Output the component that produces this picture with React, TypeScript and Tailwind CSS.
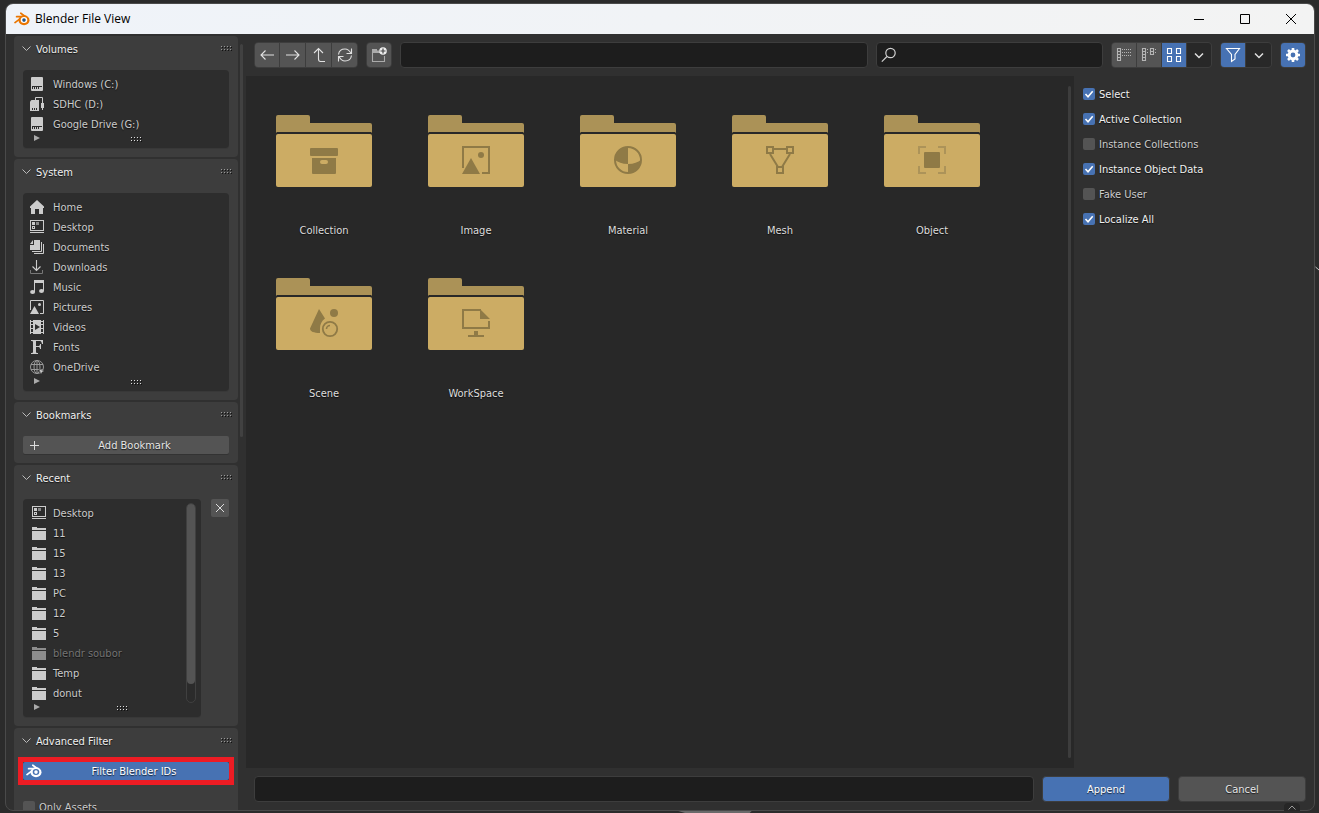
import React from "react";

const shadow = "[text-shadow:0_1px_1px_rgba(0,0,0,0.7)]";
const text = "pt-0.5 leading-4 [text-shadow:0_1px_1px_rgba(0,0,0,0.7)]";

type IconProps = { children: React.ReactNode; className?: string };

function Icon14({ children, className = "" }: IconProps) {
  return (
    <svg viewBox="0 0 14 14" className={"size-3.5 shrink-0 " + className} fill="#cccccc" aria-hidden="true">
      {children}
    </svg>
  );
}

const icons: Record<string, React.ReactNode> = {
  drive: (
    <>
      <rect x="1" width="12" height="14" rx="1" />
      <path d="M2 9h10v4H2z" fill="#2d2d2d" />
      <path d="M3 10h1v2H3zM5 10h1v2H5zM7 10h1v2H7zM9 10h3v3H9zM2 12h10v1H2z" />
    </>
  ),
  removable: (
    <>
      <path d="M0 4.500 1.500 3H9v11H0z" />
      <path d="M2 11h1v2H2zM4 11h1v2H4zM6 11h1v2H6z" fill="#2d2d2d" />
      <path d="M5.500 3V.5h7V7M12.500 11v2" fill="none" stroke="#cccccc" />
      <path d="M11 6h3v5h-3z" />
    </>
  ),
  home: <path d="M7 0 14 6.500V8h-1v6H9V9H5v5H1V8H0V6.500z" />,
  desktop: (
    <g shapeRendering="crispEdges">
      <path d="M0 0h14v11H0zM1 1v9h12V1z" fillRule="evenodd" />
      <path d="M2 2h3v3H2zM0 12h14v1H0z" />
      <path d="M6 2h3v3H6z" fill="#888888" />
      <path d="M2 6h3v3H2zM3 7v1h1V7z" fillRule="evenodd" />
    </g>
  ),
  documents: (
    <>
      <path d="M4 0h6v10H0V5h4zM3 0v4H0z" />
      <path d="M11.500 2v9.500H2M13.500 4v9.500H4" fill="none" stroke="#cccccc" />
    </>
  ),
  downloads: (
    <>
      <path d="M6.500 0v10M2.500 6.500l4 4 4-4" fill="none" stroke="#cccccc" strokeWidth="1.100" />
      <path d="M.5 10v3.500h12V10" fill="none" stroke="#777777" />
    </>
  ),
  music: (
    <>
      <path d="M4 0h10v11h-1V3H5v9H4z" />
      <ellipse cx="2.600" cy="12" rx="2.500" ry="2" />
      <ellipse cx="11.500" cy="11" rx="2.500" ry="2" />
    </>
  ),
  pictures: (
    <>
      <path d="M.5 10V.5h13v13H10" fill="none" stroke="#cccccc" />
      <path d="M4.500 6 9 14H0z" />
      <circle cx="9.500" cy="4.500" r="1.500" />
    </>
  ),
  videos: (
    <>
      <path d="M3 0h8v14H3zM0 0h1v14H0zM13 0h1v14h-1zM0 1h14v1H0zM0 4h14v1H0zM0 8h14v1H0zM0 12h14v1H0z" />
      <path d="M5 4v6l5-3z" fill="#2d2d2d" />
    </>
  ),
  fonts: (
    <path d="M1 0h12v4h-1C11.500 1.500 11 1 9 1H6v5h2c1.500 0 2-.5 2-2h1v5h-1C10 7.500 9.500 7 8 7H6v5c0 .8.500 1 2 1v1H1v-1c1.500 0 2-.2 2-1V2C3 1.200 2.500 1 1 1z" />
  ),
  network: (
    <>
      <g fill="none" stroke="#999999">
        <circle cx="7" cy="7" r="6.500" />
        <ellipse cx="7" cy="7" rx="3" ry="6.500" />
        <path d="M7 0v14M1 4.500h12M1 9.500h12" />
      </g>
      <path d="M9 9l5.500 2-2.300 1L11 14.500z" stroke="#2d2d2d" strokeWidth=".5" />
    </>
  ),
  folder: (
    <g shapeRendering="crispEdges">
      <path d="M0 1h5v1h9v2H0z" />
      <path d="M0 5h14v9H0z" />
    </g>
  ),
};

function Grip({ className = "" }: { className?: string }) {
  return (
    <svg viewBox="0 0 11 5" className={"h-[5px] w-[11px] " + className} shapeRendering="crispEdges" aria-hidden="true">
      {[0, 3, 6, 9].map((x) =>
        [0, 3].map((y) => (
          <React.Fragment key={`${x}-${y}`}>
            <rect x={x + 1} y={y + 1} width="1" height="1" fill="#111111" />
            <rect x={x} y={y} width="1" height="1" fill="currentColor" />
          </React.Fragment>
        ))
      )}
    </svg>
  );
}

function Panel({ title, children }: { title: string; children: React.ReactNode }) {
  return (
    <section className="shrink-0 rounded bg-[#3d3d3d] pb-[9px]">
      <button type="button" className="flex h-[34px] w-full items-start px-2 pt-[5px] text-left text-[#f0f0f0]">
        <svg viewBox="0 0 9 16" className="h-4 w-[9px]" fill="none" stroke="#bbbbbb" aria-hidden="true">
          <path d="M.5 5.500l4 4 4-4" />
        </svg>
        <span className={"ml-[5px] flex-1 pt-px leading-4 " + shadow}>{title}</span>
        <Grip className="mt-[5px] -mr-0.5 text-[#999999]" />
      </button>
      {children}
    </section>
  );
}

type Item = { icon: string; label: string; dim?: boolean };

function ItemList({ items, inset = false }: { items: Item[]; inset?: boolean }) {
  return (
    <div className="flex-1 rounded bg-[#2d2d2d] pt-1 shadow-[0_1px_0_#383838]">
      <div className="flex">
        <ul className="flex-1">
          {items.map((item) => (
            <li key={item.label}>
              <button
                type="button"
                className={
                  "flex h-5 w-full items-center text-left " +
                  (inset ? "gap-[7px] pl-[9px] " : "gap-[9px] pl-[7px] ") +
                  (item.dim ? "text-[#747474]" : "text-[#cccccc]")
                }
              >
                <Icon14 className={item.dim ? "opacity-60" : ""}>{icons[item.icon]}</Icon14>
                <span className={text}>{item.label}</span>
              </button>
            </li>
          ))}
        </ul>
        {inset && (
          <div className="mr-[5px] flex w-2.5 flex-col rounded-full border border-[#404040] bg-[#2b2b2b]">
            <div className="h-[91%] rounded-full bg-[#545454]" />
          </div>
        )}
      </div>
      <div className="flex h-3.5 items-start pl-[11px]">
        <svg viewBox="0 0 6 6" className="mr-[3px] mt-px size-1.5" fill="#aaaaaa" aria-hidden="true">
          <path d="M0 0l6 3-6 3z" />
        </svg>
        <Grip className="mx-auto mt-[3px] text-[#dddddd]" />
      </div>
    </div>
  );
}

const volumes: Item[] = [
  { icon: "drive", label: "Windows (C:)" },
  { icon: "removable", label: "SDHC (D:)" },
  { icon: "drive", label: "Google Drive (G:)" },
];

const system: Item[] = [
  { icon: "home", label: "Home" },
  { icon: "desktop", label: "Desktop" },
  { icon: "documents", label: "Documents" },
  { icon: "downloads", label: "Downloads" },
  { icon: "music", label: "Music" },
  { icon: "pictures", label: "Pictures" },
  { icon: "videos", label: "Videos" },
  { icon: "fonts", label: "Fonts" },
  { icon: "network", label: "OneDrive" },
];

const recent: Item[] = [
  { icon: "desktop", label: "Desktop" },
  { icon: "folder", label: "11" },
  { icon: "folder", label: "15" },
  { icon: "folder", label: "13" },
  { icon: "folder", label: "PC" },
  { icon: "folder", label: "12" },
  { icon: "folder", label: "5" },
  { icon: "folder", label: "blendr soubor", dim: true },
  { icon: "folder", label: "Temp" },
  { icon: "folder", label: "donut" },
];

function BlenderMark({ body, ring, pupil, className }: { body: string; ring: string; pupil: string; className: string }) {
  return (
    <svg viewBox="0 0 16 14" className={className} aria-hidden="true">
      <g fill="none" stroke={body} strokeLinecap="round" strokeWidth="1.700">
        <path d="M6.800 1.200 11.500 4.600" />
        <path d="M2.600 4.700H9" />
        <path d="M1 10.600 7.500 5.600" />
      </g>
      <ellipse cx="10" cy="8.300" rx="5.500" ry="5" fill={body} />
      <ellipse cx="10" cy="8.100" rx="3.300" ry="3" fill={ring} />
      <circle cx="10" cy="8.100" r="1.800" fill={pupil} />
    </svg>
  );
}

function Check({ label, checked = false }: { label: string; checked?: boolean }) {
  return (
    <label className={"flex h-[25px] items-center gap-1 pb-px " + (checked ? "text-[#f0f0f0]" : "text-[#cccccc]")}>
      <span className="grid size-3 place-items-center">
        <input
          type="checkbox"
          defaultChecked={checked}
          className="peer col-start-1 row-start-1 size-3 appearance-none rounded-xs bg-[#545454] checked:bg-[#4772b3]"
        />
        <svg
          viewBox="0 0 12 12"
          className="pointer-events-none invisible col-start-1 row-start-1 size-3 peer-checked:visible"
          fill="none"
          stroke="#ffffff"
          strokeWidth="1.600"
          aria-hidden="true"
        >
          <path d="M2.500 6l2.500 2.700L9.700 3.200" />
        </svg>
      </span>
      <span className={text}>{label}</span>
    </label>
  );
}

const emblems: Record<string, React.ReactNode> = {
  Collection: (
    <>
      <rect x="0" y="2" width="28" height="8" rx="1" />
      <path d="M2 12h24v15a1 1 0 0 1-1 1H3a1 1 0 0 1-1-1zM12 14a2 2 0 0 0 0 4h4a2 2 0 0 0 0-4z" fillRule="evenodd" />
    </>
  ),
  Image: (
    <>
      <path d="M1 22V1h26v26h-7" fill="none" stroke="#8f7a46" strokeWidth="2" />
      <path d="M9 12l9 16H0z" />
      <circle cx="19" cy="9" r="3" />
    </>
  ),
  Material: (
    <>
      <circle cx="14" cy="14" r="13" fill="none" stroke="#8f7a46" strokeWidth="2" />
      <path d="M14 1v17C8 18 4 16 1 14 1 6 7 1 14 1zM14 18c6 0 10-2 13-4 0 8-6 13-13 13z" />
    </>
  ),
  Mesh: (
    <g fill="none" stroke="#8f7a46" strokeWidth="2">
      <path d="M1 1h6v6H1zM21 1h6v6h-6zM11 21h6v6h-6zM7 3h14M4 8l8 13M24 8l-8 13" />
    </g>
  ),
  Object: (
    <>
      <path d="M1 8V1h7M20 1h7v7M27 20v7h-7M8 27H1v-7" fill="none" stroke="#ac9359" strokeWidth="2" />
      <rect x="6" y="6" width="16" height="16" rx="1" />
    </>
  ),
  Scene: (
    <>
      <path d="M9 0l6 9.500c-3.500 2.500-5 6-5 10V24C4 24 0 22.500 0 19.500z" />
      <circle cx="24" cy="4" r="4" />
      <circle cx="20" cy="20" r="7.200" fill="none" stroke="#8f7a46" strokeWidth="1.800" />
      <path d="M16.500 20a3.500 3.500 0 0 1 3.500-3.500" fill="none" stroke="#8f7a46" strokeWidth="1.600" />
    </>
  ),
  WorkSpace: (
    <>
      <path d="M19 1H1v18h26v-7" fill="none" stroke="#8f7a46" strokeWidth="2" />
      <path d="M18 0l10 10H18zM12 22h4v4h6v2H6v-2h6z" />
    </>
  ),
};

function Folder({ name }: { name: string }) {
  return (
    <button type="button" className="flex h-[163px] flex-col items-center text-[#dddddd]">
      <svg viewBox="0 0 96 72" className="h-[72px] w-24" aria-hidden="true">
        <path d="M0 18V2a2 2 0 0 1 2-2h30a2 2 0 0 1 2 2v6h60a2 2 0 0 1 2 2v8l-1-1H1z" fill="#ab9257" />
        <rect y="19" width="96" height="53" rx="2" fill="#ccac64" />
        <g transform="translate(34 31)" fill="#8f7a46">
          {emblems[name]}
        </g>
      </svg>
      <span className={"mt-9 leading-4 " + shadow}>{name}</span>
    </button>
  );
}

function Tool({ label, className, children }: { label: string; className: string; children: React.ReactNode }) {
  return (
    <button type="button" aria-label={label} className={"grid h-6 place-items-center " + className}>
      <svg viewBox="0 0 16 16" className="size-4" fill="none" stroke="#e0e0e0" strokeWidth="1.100" aria-hidden="true">
        {children}
      </svg>
    </button>
  );
}

const groupBox = "flex shrink-0 gap-px overflow-hidden rounded border border-[#3d3d3d] bg-[#3d3d3d]";
const field = "h-[26px] min-w-0 rounded border border-[#3d3d3d] bg-[#1d1d1d] text-[#e6e6e6] outline-none";

function Toolbar() {
  return (
    <div className="flex h-[42px] shrink-0 items-center gap-2 px-2">
      <div className={groupBox}>
        <Tool label="Back" className="w-6 bg-[#545454]">
          <path d="M15 8H2M6.500 3.500L2 8l4.500 4.500" />
        </Tool>
        <Tool label="Forward" className="w-[25px] bg-[#545454]">
          <path d="M1 8h13M9.500 3.500L14 8l-4.500 4.500" />
        </Tool>
        <Tool label="Parent directory" className="w-[25px] bg-[#545454]">
          <path d="M7.500 1.500V12c0 1.500.5 2.500 2 2.500H14M3 6l4.500-4.500L12 6" />
        </Tool>
        <Tool label="Refresh" className="w-[25px] bg-[#545454]">
          <path d="M1.500 7.500C2 4 4.500 2 8 2c2.500 0 4.500 1.500 6 4.500M14.500 1.500v5h-5M14.500 8.500C14 12 11.500 14 8 14c-2.500 0-4.500-1.500-6-4.500M1.500 14.500v-5h5" />
        </Tool>
      </div>
      <div className={groupBox}>
        <Tool label="New folder" className="w-6 bg-[#545454]">
          <path d="M9 5.500H1.500v9h12V9" stroke="#aaaaaa" />
          <path d="M1 2h5v1.500h2V6H1z" fill="#aaaaaa" stroke="none" />
          <circle cx="12" cy="4" r="3.800" fill="#eeeeee" stroke="none" />
          <path d="M12 1.500v5M9.500 4h5" stroke="#444444" strokeWidth="1.200" />
        </Tool>
      </div>
      <input aria-label="Path" className={field + " flex-[469] px-2"} />
      <div className={field + " flex flex-[226] items-center gap-1 px-1"}>
        <svg viewBox="0 0 16 16" className="size-4 shrink-0" fill="none" stroke="#d0d0d0" strokeWidth="1.200" aria-hidden="true">
          <circle cx="9.500" cy="6" r="4.700" />
          <path d="M6 9.500L.8 14.700" />
        </svg>
        <input type="search" aria-label="Search" className="min-w-0 flex-1 bg-transparent outline-none" />
      </div>
      <div className={groupBox}>
        <Tool label="Vertical list" className="w-6 bg-[#545454]">
          <path d="M1.500 1.500h3v12h-3zM1.500 4.500h3M1.500 7.500h3M1.500 10.500h3" stroke="#b5b5b5" />
          <path d="M6 2.500h10M6 5.500h10M6 8.500h10" stroke="#b5b5b5" strokeDasharray="1 1" />
        </Tool>
        <Tool label="Horizontal list" className="w-6 bg-[#545454]">
          <path d="M1.500 1.500h3v12h-3zM1.500 4.500h3M1.500 7.500h3M1.500 10.500h3M9.500 1.500h3v6h-3zM9.500 4.500h3" stroke="#b5b5b5" />
          <path d="M6.500 2v6M14.500 2v6" stroke="#b5b5b5" strokeWidth="1" strokeDasharray="1 2" />
        </Tool>
        <Tool label="Thumbnails" className="w-6 bg-[#4772b3]">
          <path d="M1.500 1.500h4v5h-4zM10.500 1.500h4v5h-4zM1.500 9.500h4v5h-4zM10.500 9.500h4v5h-4z" stroke="#ffffff" />
        </Tool>
        <Tool label="Display settings" className="w-6 bg-[#282828]">
          <path d="M4 6.500l4 4 4-4" strokeWidth="1.500" />
        </Tool>
      </div>
      <div className={groupBox}>
        <Tool label="Filter" className="w-6 bg-[#4772b3]">
          <path d="M1.500 1.500h13L10 7.500v4.500l-3.500 2.500v-7z" stroke="#ffffff" />
        </Tool>
        <Tool label="Filter settings" className="w-[25px] bg-[#282828]">
          <path d="M4 6.500l4 4 4-4" strokeWidth="1.500" />
        </Tool>
      </div>
      <div className={groupBox}>
        <Tool label="Toggle options" className="w-6 bg-[#4772b3]">
          <circle cx="8" cy="8" r="3.900" stroke="#ffffff" strokeWidth="3" />
          <path
            d="M8 1v2M8 13v2M1 8h2M13 8h2M3 3l1.500 1.500M11.500 11.500L13 13M13 3l-1.500 1.500M4.500 11.500L3 13"
            stroke="#ffffff"
            strokeWidth="2.600"
          />
        </Tool>
      </div>
    </div>
  );
}

function Sidebar() {
  return (
    <aside className="relative w-60 shrink-0 overflow-hidden pl-2 pt-0.5">
      <div className="flex w-56 flex-col gap-0.5">
        <Panel title="Volumes">
          <div className="px-[9px]">
            <ItemList items={volumes} />
          </div>
        </Panel>
        <Panel title="System">
          <div className="px-[9px]">
            <ItemList items={system} />
          </div>
        </Panel>
        <Panel title="Bookmarks">
          <div className="px-[9px]">
            <button type="button" className="flex h-[18px] w-full items-center rounded-xs bg-[#545454] px-1.5 text-[#e6e6e6] shadow-[0_1px_0_#333333]">
              <svg viewBox="0 0 11 11" className="size-[11px]" stroke="#dddddd" aria-hidden="true">
                <path d="M5.500 1v9M1 5.500h9" />
              </svg>
              <span className={"flex-1 pl-1.5 text-center " + text}>Add Bookmark</span>
            </button>
          </div>
        </Panel>
        <Panel title="Recent">
          <div className="flex items-start gap-2.5 px-[9px]">
            <ItemList items={recent} inset />
            <button type="button" aria-label="Clear recent items" className="grid size-[18px] place-items-center rounded-xs bg-[#545454]">
              <svg viewBox="0 0 10 10" className="size-2.5" stroke="#dddddd" aria-hidden="true">
                <path d="M1 1l8 8M9 1L1 9" />
              </svg>
            </button>
          </div>
        </Panel>
        <Panel title="Advanced Filter">
          <div className="px-[9px]">
            <div className="outline-5 outline-[#ed1c24]">
              <button type="button" className="flex h-[18px] w-full items-center rounded-xs bg-[#4772b3] px-[3px] text-white">
                <BlenderMark className="h-3.5 w-4" body="#ffffff" ring="#4772b3" pupil="#ffffff" />
                <span className={"flex-1 text-center " + text}>Filter Blender IDs</span>
              </button>
            </div>
            <div className="pt-[15px]">
              <Check label="Only Assets" />
            </div>
          </div>
        </Panel>
      </div>
      <div className="absolute left-[234px] top-2.5 h-[393px] w-[3px] rounded-full bg-[#414141]" />
    </aside>
  );
}

export default function App() {
  return (
    <div className="relative flex h-screen flex-col overflow-hidden bg-[#2b2b2b] pb-0.5 pl-[5px] pr-1 pt-[3px] font-['DejaVu_Sans_Condensed','Open_Sans',sans-serif] text-[11px]">
      <div className="flex min-h-0 flex-1 flex-col overflow-hidden rounded-lg border border-[#4a4a4a] bg-[#303030]">
        <header className="flex h-[30px] shrink-0 items-center bg-linear-to-r from-[#eff3f9] to-[#f3f3f3] pl-2 text-black">
          <BlenderMark className="h-3.5 w-4" body="#ea7600" ring="#ffffff" pupil="#265787" />
          <h1 className="ml-[5px] flex-1 font-['Open_Sans',sans-serif] text-xs">Blender File View</h1>
          {[
            ["Minimize", "M1 6.500h10"],
            ["Maximize", "M1.500 1.500h9v9h-9z"],
            ["Close", "M1 1l10 10M11 1L1 11"],
          ].map(([label, d]) => (
            <button key={label} type="button" aria-label={label} className="grid h-full w-[46px] place-items-center">
              <svg viewBox="0 0 12 12" className="size-3" fill="none" stroke="#000000" aria-hidden="true">
                <path d={d} />
              </svg>
            </button>
          ))}
        </header>
        <div className="flex min-h-0 flex-1">
          <Sidebar />
          <div className="flex min-w-0 flex-1 flex-col">
            <Toolbar />
            <div className="flex min-h-0 flex-1">
              <main className="flex min-w-0 flex-1 bg-[#282828] pl-0.5">
                <div className="grid flex-1 auto-rows-min grid-cols-[repeat(auto-fill,152px)] pt-[39px]">
                  {Object.keys(emblems).map((name) => (
                    <Folder key={name} name={name} />
                  ))}
                </div>
                <div className="my-2.5 mr-[3px] w-[3px] rounded-full bg-[#3d3d3d]" />
              </main>
              <aside className="w-60 shrink-0 pl-[9px] pt-1.5">
                <Check label="Select" checked />
                <Check label="Active Collection" checked />
                <Check label="Instance Collections" />
                <Check label="Instance Object Data" checked />
                <Check label="Fake User" />
                <Check label="Localize All" checked />
              </aside>
            </div>
            <div className="flex h-[42px] shrink-0 items-center gap-2 px-2">
              <input aria-label="File name" className={field + " flex-1 px-2"} />
              <button type="button" className={"h-[26px] w-32 rounded border border-[#3d3d3d] bg-[#4772b3] text-white " + text}>
                Append
              </button>
              <button type="button" className={"h-[26px] w-32 rounded border border-[#3d3d3d] bg-[#545454] text-[#e6e6e6] " + text}>
                Cancel
              </button>
            </div>
          </div>
        </div>
      </div>
      <div className="absolute bottom-0.5 right-[19px] grid h-2 w-4 place-items-center rounded-t bg-[#262626]">
        <svg viewBox="0 0 8 5" className="h-[5px] w-2" fill="none" stroke="#999999" aria-hidden="true">
          <path d="M.5 4.500l3.500-3.500 3.500 3.500" />
        </svg>
      </div>
      <svg viewBox="0 0 110 3" className="absolute bottom-0 left-1/2 h-[2px] w-[110px]" aria-hidden="true">
        <path d="M0 0h110l-3 3H10z" fill="#6a6a6a" />
      </svg>
      <svg viewBox="0 0 4 5" className="absolute right-0 top-[266px] h-[5px] w-1" fill="none" stroke="#cccccc" aria-hidden="true">
        <path d="M.5 1l3.500 3" />
      </svg>
    </div>
  );
}
